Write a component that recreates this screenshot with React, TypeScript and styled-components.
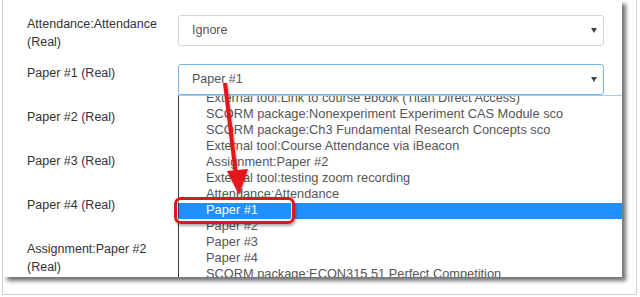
import React from "react";
import styled, { createGlobalStyle } from "styled-components";

const GlobalStyle = createGlobalStyle`
  html, body { margin: 0; padding: 0; background: #fff; }
  body { font-family: "Liberation Sans", Arial, Helvetica, sans-serif; }
`;

const Frame = styled.div`
  margin-left: 2px;
  width: 635px;
  height: 295px;
  box-sizing: border-box;
  border: 1px solid #d2d2d2;
  border-top: none;
  background: #fff;
`;

const Panel = styled.div`
  position: relative;
  width: 619px;
  height: 277px;
  box-sizing: border-box;
  padding: 15px 0 0 24px;
  overflow: hidden;
  background: #fff;
  box-shadow: 4px 4px 4px rgba(0, 0, 0, 0.55);
`;

const Form = styled.div`
  display: grid;
  grid-template-columns: 151px 426px;
  row-gap: 13px;
  align-items: start;
`;

const Label = styled.div`
  font-size: 12.5px;
  line-height: 18px;
  color: #333;
`;

const Select = styled.div<{ $focused?: boolean }>`
  height: 31px;
  box-sizing: border-box;
  border: 1px solid ${(p) => (p.$focused ? "#74b6ec" : "#d6d6d6")};
  border-radius: 3px;
  display: flex;
  align-items: center;
  justify-content: space-between;
  padding: 0 6px 2px 13px;
  font-size: 12.5px;
  color: #555;
  background: #fff;
`;

const Caret = styled.span`
  width: 0;
  height: 0;
  margin-top: 2px;
  margin-left: auto;
  border-left: 3px solid transparent;
  border-right: 3px solid transparent;
  border-top: 5px solid #444;
`;

const Dropdown = styled.div`
  position: absolute;
  left: 175px;
  top: 95px;
  width: 470px;
  bottom: 0;
  background: #fff;
  border-left: 1px solid #3a3a44;
  border-top: 1px solid #9fcbf2;
  overflow: hidden;
`;

const OptionList = styled.div`
  margin-top: -5px;
  display: flex;
  flex-direction: column;
`;

const Option = styled.div<{ $selected?: boolean }>`
  height: 16px;
  box-sizing: border-box;
  line-height: 14px;
  padding-left: 27px;
  font-size: 12.8px;
  white-space: nowrap;
  color: ${(p) => (p.$selected ? "#fff" : "#555")};
  background: ${(p) => (p.$selected ? "#1e90ff" : "transparent")};
`;

const Highlight = styled.div`
  position: absolute;
  left: 171px;
  top: 197px;
  width: 121px;
  height: 27px;
  box-sizing: border-box;
  border: 3px solid #e3151c;
  border-radius: 7px;
  box-shadow: 1px 2px 3px rgba(0, 0, 0, 0.35),
    inset 0 0 0 1px rgba(255, 255, 255, 0.85);
  pointer-events: none;
`;

const ArrowLayer = styled.svg`
  position: absolute;
  left: 0;
  top: 0;
  pointer-events: none;
`;

const rows: { label: string; value?: string; focused?: boolean }[] = [
  { label: "Attendance:Attendance (Real)", value: "Ignore" },
  { label: "Paper #1 (Real)", value: "Paper #1", focused: true },
  { label: "Paper #2 (Real)" },
  { label: "Paper #3 (Real)" },
  { label: "Paper #4 (Real)" },
  { label: "Assignment:Paper #2 (Real)" },
];

const options = [
  "External tool:Link to course ebook (Titan Direct Access)",
  "SCORM package:Nonexperiment Experiment CAS Module sco",
  "SCORM package:Ch3 Fundamental Research Concepts sco",
  "External tool:Course Attendance via iBeacon",
  "Assignment:Paper #2",
  "External tool:testing zoom recording",
  "Attendance:Attendance",
  "Paper #1",
  "Paper #2",
  "Paper #3",
  "Paper #4",
  "SCORM package:ECON315 51 Perfect Competition",
];

export default function App() {
  return (
    <>
      <GlobalStyle />
      <Frame>
        <Panel>
          <Form>
            {rows.map((r) => (
              <React.Fragment key={r.label}>
                <Label>{r.label}</Label>
                <Select $focused={r.focused}>
                  {r.value && <span>{r.value}</span>}
                  <Caret />
                </Select>
              </React.Fragment>
            ))}
          </Form>
          <Dropdown>
            <OptionList>
              {options.map((o) => (
                <Option key={o} $selected={o === "Paper #1"}>
                  {o}
                </Option>
              ))}
            </OptionList>
          </Dropdown>
          <Highlight />
          <ArrowLayer width="619" height="277" viewBox="0 0 619 277">
            <defs>
              <filter id="sh" x="-50%" y="-10%" width="200%" height="130%">
                <feDropShadow dx="1" dy="1" stdDeviation="1" floodOpacity="0.35" />
              </filter>
            </defs>
            <g filter="url(#sh)" fill="#e3151c" stroke="none">
              <line x1="222" y1="83" x2="233" y2="176" stroke="#e3151c" strokeWidth="4" />
              <polygon points="224,171 245,169 236,195" />
            </g>
          </ArrowLayer>
        </Panel>
      </Frame>
    </>
  );
}
